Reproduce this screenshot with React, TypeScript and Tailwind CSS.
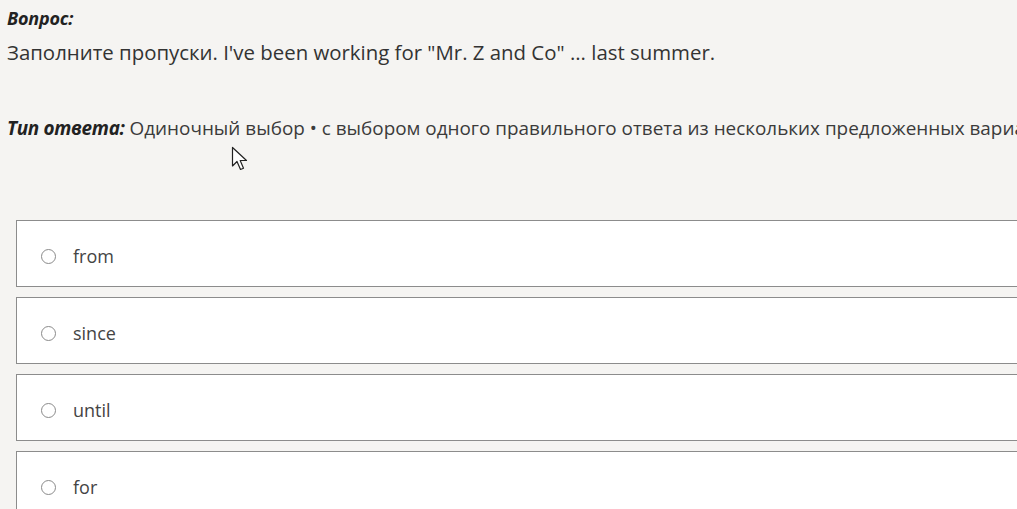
import React from 'react';

const options = ['from', 'since', 'until', 'for'];

function Cursor() {
  return (
    <svg
      className="absolute left-[231px] top-[146px]"
      width="18"
      height="26"
      viewBox="0 0 18 26"
    >
      <path
        d="M1.5 1.5 L1.5 20 L6 15.5 L9.5 23.5 L12.5 22.2 L9.2 14.5 L15.5 14.5 Z"
        fill="white"
        stroke="#222"
        strokeWidth="1.2"
        strokeLinejoin="round"
      />
    </svg>
  );
}

export default function App() {
  return (
    <div
      className="relative w-[1017px] h-[509px] overflow-hidden bg-[#f5f4f2] text-[#3b3b3b]"
      style={{ fontFamily: '"Open Sans", "Noto Sans", sans-serif' }}
    >
      <div className="pl-[7px] pt-[5px]">
        <div className="text-[18px] font-bold italic text-[#222] leading-[26px] tracking-[-0.2px]">Вопрос:</div>
        <div className="mt-[6px] text-[20.4px] leading-[30px] text-[#333]">
          Заполните пропуски. I've been working for "Mr. Z and Co" ... last summer.
        </div>
        <div className="mt-[48px] whitespace-nowrap text-[18.9px] leading-[26px] text-[#3b3b3b]">
          <span className="font-bold italic text-[#222] tracking-[-0.3px]">Тип ответа:</span> Одиночный выбор • с выбором одного
          правильного ответа из нескольких предложенных вариантов
        </div>
      </div>

      <div className="mt-[79px] ml-[16px] flex flex-col gap-[10px]">
        {options.map((o) => (
          <div
            key={o}
            className="h-[67px] w-[1100px] flex items-center pt-[6px] border-[1.5px] border-[#8c8c8c] bg-white"
          >
            <span className="ml-[24px] w-[15px] h-[15px] rounded-full border border-[#8a8a8a] bg-white" />
            <span className="ml-[17px] text-[18px] text-[#444]">{o}</span>
          </div>
        ))}
      </div>

      <Cursor />
    </div>
  );
}
